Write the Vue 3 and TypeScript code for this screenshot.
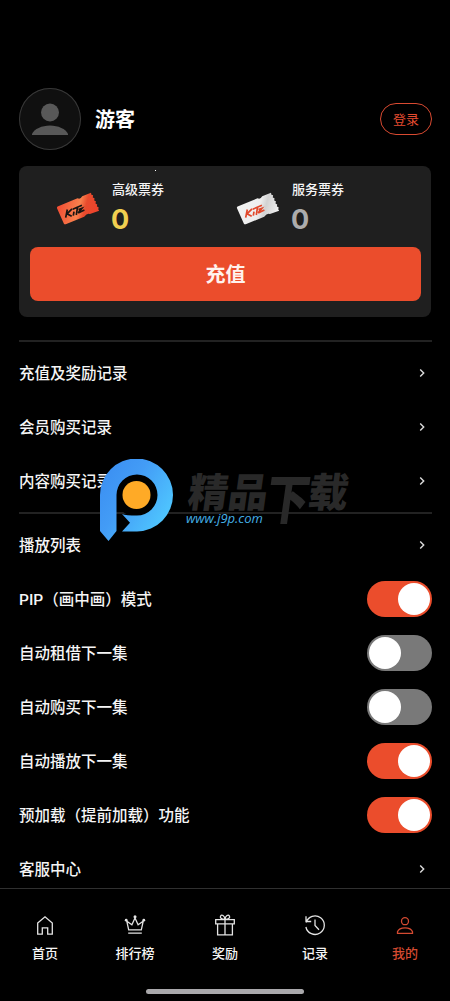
<script setup lang="ts">
interface Row {
  label: string
  on?: boolean
}

interface Tab {
  label: string
  icon: 'home' | 'crown' | 'gift' | 'history' | 'user'
  active?: boolean
}

interface Ticket {
  label: string
  count: number
  kind: 'premium' | 'service'
}

const tickets: Ticket[] = [
  { label: '高级票券', count: 0, kind: 'premium' },
  { label: '服务票券', count: 0, kind: 'service' },
]

const sections: Row[][] = [
  [{ label: '充值及奖励记录' }, { label: '会员购买记录' }, { label: '内容购买记录' }],
  [
    { label: '播放列表' },
    { label: 'PIP（画中画）模式', on: true },
    { label: '自动租借下一集', on: false },
    { label: '自动购买下一集', on: false },
    { label: '自动播放下一集', on: true },
    { label: '预加载（提前加载）功能', on: true },
    { label: '客服中心' },
  ],
]

const tabs: Tab[] = [
  { label: '首页', icon: 'home' },
  { label: '排行榜', icon: 'crown' },
  { label: '奖励', icon: 'gift' },
  { label: '记录', icon: 'history' },
  { label: '我的', icon: 'user', active: true },
]
</script>

<template>
  <div class="screen">
    <main class="content">
      <header class="profile">
        <div class="avatar">
          <svg width="62" height="62" viewBox="0 0 62 62">
            <circle cx="31" cy="24.500" r="9" />
            <path d="M13 47v-1c2-5 10-8.500 18-8.500S47 41 49 46v1z" />
          </svg>
        </div>
        <h1 class="name">游客</h1>
        <button class="login">登录</button>
      </header>

      <section class="wallet">
        <div class="tickets">
          <div v-for="t in tickets" :key="t.kind" class="ticket" :class="t.kind">
            <svg class="ticket-art" width="44" height="36" viewBox="0 0 44 36">
              <defs>
                <linearGradient :id="'fill-' + t.kind" x1="0" y1="0.200" x2="1" y2="0.400">
                  <stop offset="0" :stop-color="t.kind === 'premium' ? '#f04630' : '#f2f2f2'" />
                  <stop offset="0.550" :stop-color="t.kind === 'premium' ? '#f9814d' : '#eeeeee'" />
                  <stop offset="0.700" :stop-color="t.kind === 'premium' ? '#e94b2d' : '#d2d2d2'" />
                  <stop offset="1" :stop-color="t.kind === 'premium' ? '#ee432c' : '#f0f0f0'" />
                </linearGradient>
              </defs>
              <path
                :fill="`url(#fill-${t.kind})`"
                d="M1.600 15.500 21.500 7.300Q24.500 8.700 26.200 5.300L35 1.800l.4 2 1.700.5-.3 2.200 1.700.8-.3 2.200 1.700.8-.4 2.200 1.700.9-.3 2.100 1.700.8-.3 2.200.900 1.300-9.300 3.300Q31.300 21.700 28.200 25.800L9.700 33.200q-1.300.4-1.900-.8L1 17.200q-.4-1.200.6-1.700z"
              />
              <path
                class="scribble"
                d="M11.300 18.500 9.700 26.600M16 17.800l-5 5 4.700 2.500M18 20.700l-.7 4M16.700 18.200l9.200-3.900M21.500 16.400l-1.200 7.600M22.500 18.600l3.400-1.200-3.700 4.500 6.200-2.800"
              />
            </svg>
            <div class="ticket-info">
              <span class="ticket-label">{{ t.label }}</span>
              <strong class="ticket-count">{{ t.count }}</strong>
            </div>
          </div>
        </div>
        <button class="recharge">充值</button>
        <i class="speck"></i>
      </section>

      <section v-for="(rows, i) in sections" :key="i" class="group">
        <div v-for="row in rows" :key="row.label" class="row">
          <span class="row-label">{{ row.label }}</span>
          <i v-if="row.on !== undefined" class="switch" :class="{ on: row.on }"></i>
          <svg v-else class="chevron" width="10" height="10" viewBox="0 0 10 10">
            <path d="m3.200 1.500 3.500 3.500-3.500 3.500" />
          </svg>
        </div>
      </section>
    </main>

    <nav class="tabbar">
      <div v-for="tab in tabs" :key="tab.label" class="tab" :class="{ active: tab.active }">
        <svg width="24" height="24" viewBox="0 0 24 24">
          <path v-if="tab.icon === 'home'" d="M4.700 10 12 3.800 19.300 10v11.200h-4.600v-6.400H9.300v6.400H4.700z" />
          <g v-else-if="tab.icon === 'crown'">
            <path d="M5.700 16.800 3.800 8.300l5.100 3.400L12 5l3.100 6.700 5.100-3.400-1.900 8.500zM5.200 20.200h13.600" />
            <g class="dots">
              <circle cx="3.200" cy="7.200" r="1.400" />
              <circle cx="12" cy="3.700" r="1.500" />
              <circle cx="20.800" cy="7.200" r="1.400" />
            </g>
          </g>
          <path
            v-else-if="tab.icon === 'gift'"
            d="M2.700 6.600h18.600v4.200H2.700zM4.600 10.800h14.800v11H4.600zM12 6.600v15.200M12 6.400C8 6.400 6.700 4.500 7.600 3c1-1.700 4-.8 4.400 3.400.4-4.200 3.400-5.100 4.400-3.400.9 1.500-.4 3.400-4.400 3.400"
          />
          <path
            v-else-if="tab.icon === 'history'"
            d="M3.100 9.500A9.300 9.300 0 1 1 2.900 14M3 3.300v5.200h5.200M3 8.300 6.200 5M12 6.500v6l4 4.300"
          />
          <g v-else>
            <circle cx="12" cy="8.200" r="3.500" />
            <path d="M4.500 20.300v-1.500c1-2.800 4-4 7.500-4s6.500 1.200 7.500 4v1.500z" />
          </g>
        </svg>
        <span>{{ tab.label }}</span>
      </div>
      <i class="home-indicator"></i>
    </nav>

    <div class="watermark">
      <svg width="74" height="84" viewBox="0 0 74 84">
        <defs>
          <linearGradient id="brand" x1="0" y1="0" x2="1" y2="0.700">
            <stop offset="0" stop-color="#398cf1" />
            <stop offset="0.450" stop-color="#439cf6" />
            <stop offset="1" stop-color="#50caff" />
          </linearGradient>
        </defs>
        <circle cx="37" cy="36" r="22" fill="#000" />
        <path
          fill="url(#brand)"
          d="M0 36A36.500 36.500 0 1 1 37 72.500H22l8-8.700-8-8.800Q26 56.500 37 56.500A20.500 20.500 0 1 0 16.500 36v36L8.500 82 0 72z"
        />
        <circle cx="36.500" cy="36" r="14" fill="#ffaa26" />
      </svg>
      <div class="mark-text">
        <div class="mark-title"><b>精品</b><b class="large">下</b><b>载</b></div>
        <div class="mark-url">www.j9p.com</div>
      </div>
    </div>
  </div>
</template>

<style>
body {
  background: #000;
}
</style>

<style scoped>
.screen {
  position: relative;
  display: flex;
  flex-direction: column;
  width: 450px;
  height: 1001px;
  overflow: hidden;
  background: #000;
  color: #f5f5f5;
  font-family: 'Noto Sans CJK SC', sans-serif;
}

button {
  padding: 0;
  font-family: inherit;
}

svg {
  display: block;
}

.content {
  flex: 1;
  min-height: 0;
  box-sizing: border-box;
  padding: 88px 18px 0 19px;
  overflow: hidden;
}

.profile {
  display: flex;
  align-items: center;
  height: 62px;
}

.avatar {
  box-sizing: border-box;
  width: 62px;
  height: 62px;
  border-radius: 50%;
  background: #101010;
  box-shadow: inset 0 0 0 1px #393939;
}

.avatar svg {
  fill: #585858;
}

.name {
  margin: 0 auto 0 14px;
  font-size: 20px;
  line-height: 30px;
  font-weight: 700;
  color: #fff;
}

.login {
  box-sizing: border-box;
  width: 52px;
  height: 32px;
  border: 1px solid #d94a31;
  border-radius: 16px;
  background: transparent;
  color: #e64c30;
  font-size: 13px;
  line-height: 28px;
}

.wallet {
  position: relative;
  box-sizing: border-box;
  height: 151px;
  margin: 16px 1px 0 0;
  padding: 12px 10px 0 11px;
  border-radius: 8px;
  background: #1f1f1f;
}

.tickets {
  display: grid;
  grid-template-columns: 180px 1fr;
  height: 69px;
}

.ticket {
  display: flex;
  gap: 11px;
  padding-left: 26px;
}

.ticket-art {
  margin-top: 13px;
}

.scribble {
  fill: none;
  stroke: #181412;
  stroke-width: 1.700;
}

.service .scribble {
  stroke: #e2492c;
}

.ticket-info {
  display: flex;
  flex-direction: column;
  padding-left: 1px;
}

.ticket-label {
  font-size: 13px;
  line-height: 22px;
  font-weight: 500;
}

.ticket-count {
  margin-left: -1px;
  font-family: Inter, Roboto, sans-serif;
  font-size: 27px;
  line-height: 40px;
  font-weight: 700;
  color: #f0cf50;
}

.service .ticket-count {
  color: #acacac;
}

.recharge {
  display: block;
  width: 391px;
  height: 54px;
  border: 0;
  border-radius: 8px;
  background: #eb4d2c;
  color: #fff3ee;
  font-size: 20px;
  line-height: 54px;
  font-weight: 700;
}

.speck {
  position: absolute;
  top: 4px;
  left: 136px;
  width: 1px;
  height: 1px;
  background: #fff;
}

.group {
  margin-top: 4px;
  padding-top: 4px;
  border-top: 2px solid #222;
}

.wallet + .group {
  margin-top: 23px;
}

.row {
  display: flex;
  align-items: center;
  justify-content: space-between;
  height: 54px;
  font-size: 15.500px;
  font-weight: 500;
}

.row-label {
  padding-bottom: 2px;
  font-family: Roboto, 'Noto Sans CJK SC', sans-serif;
}

.chevron {
  margin-right: 5px;
  fill: none;
  stroke: #ddd;
  stroke-width: 1.400;
}

.switch {
  box-sizing: border-box;
  width: 65px;
  height: 36px;
  padding: 2px;
  border-radius: 18px;
  background: #797979;
}

.switch::before {
  content: '';
  display: block;
  width: 32px;
  height: 32px;
  border-radius: 50%;
  background: #fff;
}

.switch.on {
  background: #eb4d2c;
}

.switch.on::before {
  margin-left: auto;
}

.tabbar {
  position: relative;
  display: grid;
  grid-template-columns: repeat(5, 1fr);
  box-sizing: border-box;
  height: 113px;
  padding-top: 24px;
  border-top: 1px solid #303030;
  background: #000;
}

.tab {
  display: flex;
  flex-direction: column;
  align-items: center;
  gap: 6px;
  font-size: 13px;
  line-height: 20px;
  font-weight: 500;
}

.tab svg {
  fill: none;
  stroke: #e4e4e4;
  stroke-width: 1.300;
}

.tab .dots {
  fill: #e4e4e4;
  stroke: none;
}

.tab.active {
  color: #d44a31;
}

.tab.active svg {
  stroke: #d44a31;
}

.home-indicator {
  position: absolute;
  bottom: 7px;
  left: 146px;
  width: 158px;
  height: 5px;
  border-radius: 3px;
  background: #a9a8ab;
}

.watermark {
  position: absolute;
  top: 459px;
  left: 100px;
  display: flex;
  gap: 12px;
}

.mark-text {
  padding-top: 7px;
}

.mark-title {
  display: flex;
  height: 45px;
  margin-left: 3px;
  color: #292929;
  font-size: 40px;
  line-height: 48px;
  font-weight: 900;
  transform: skewX(-8deg);
}

.mark-title b {
  font-weight: 900;
}

.mark-title .large {
  font-size: 43px;
  transform: scaleY(1.250) translateY(4px);
  margin: 0 -2px 0 -1px;
}

.mark-url {
  color: #43afe6;
  font-family: 'Open Sans', sans-serif;
  font-size: 13px;
  line-height: 15px;
  font-style: italic;
  font-weight: 500;
}
</style>
